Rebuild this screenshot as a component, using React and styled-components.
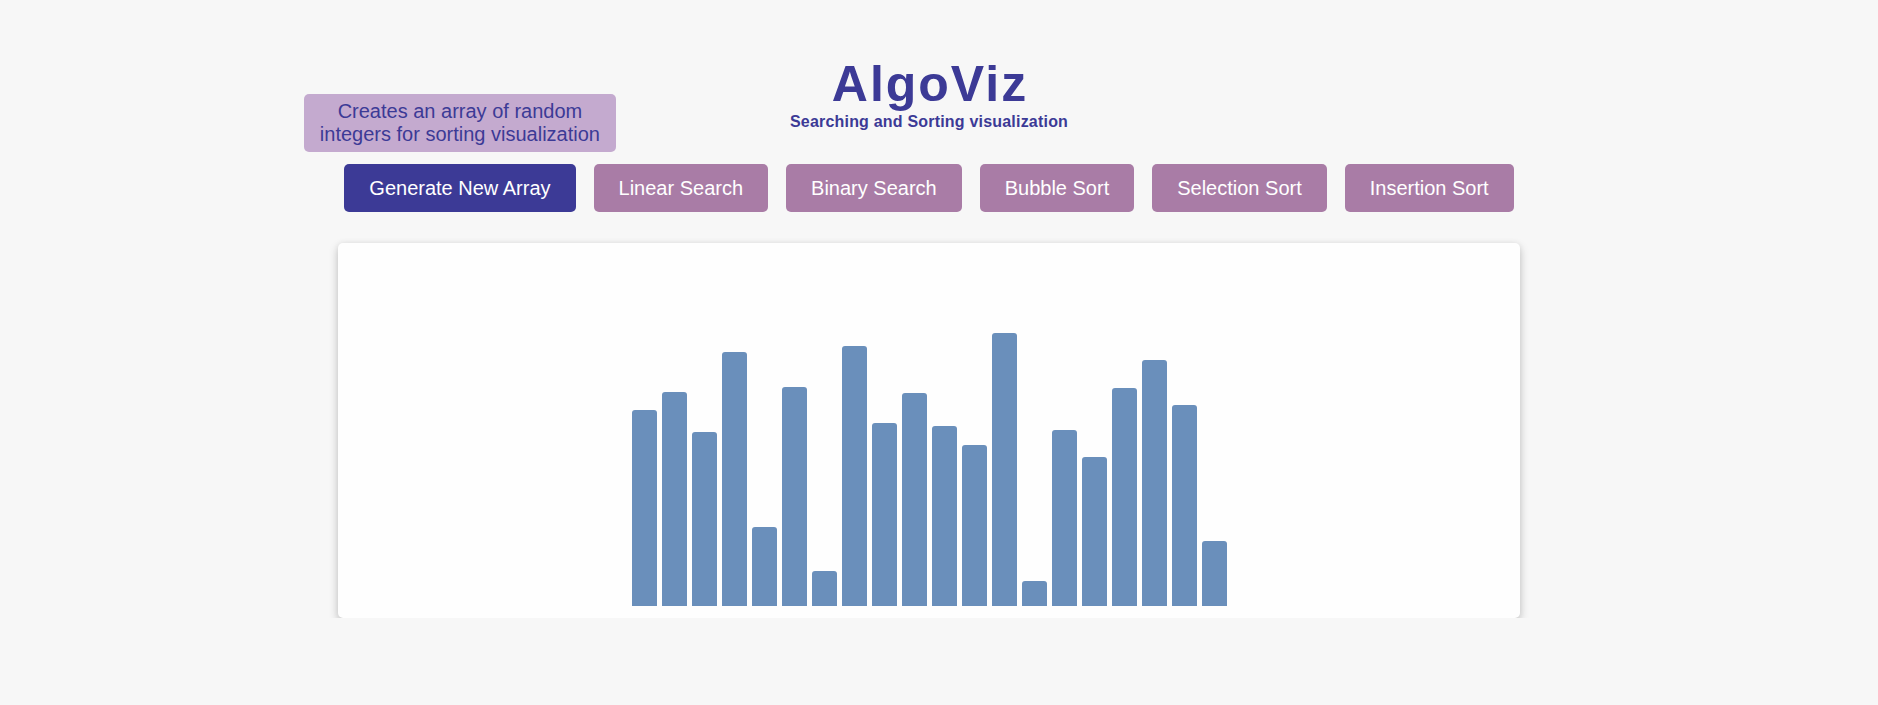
import React from 'react'
import styled, { createGlobalStyle } from 'styled-components'

const GlobalStyle = createGlobalStyle`
  body {
    margin: 0;
    background: #f7f7f7;
    font-family: "Liberation Sans", Arial, sans-serif;
  }
`

const algorithms = ['Linear Search', 'Binary Search', 'Bubble Sort', 'Selection Sort', 'Insertion Sort']

const values = [196, 214, 174, 254, 79, 219, 35, 260, 183, 213, 180, 161, 273, 25, 176, 149, 218, 246, 201, 65]

function App() {
  return (
    <>
      <GlobalStyle />
      <Page>
        <Header>
          <Title>AlgoViz</Title>
          <Subtitle>Searching and Sorting visualization</Subtitle>
        </Header>

        <ButtonRow>
          <ButtonWrap>
            <Tooltip>Creates an array of random integers for sorting visualization</Tooltip>
            <Button $primary>Generate New Array</Button>
          </ButtonWrap>
          {algorithms.map((name) => (
            <Button key={name}>{name}</Button>
          ))}
        </ButtonRow>

        <Card>
          {values.map((v, i) => (
            <Bar key={i} $h={v} />
          ))}
        </Card>
      </Page>
    </>
  )
}

export default App


const Page = styled.div`
    display: flex;
    flex-direction: column;
    align-items: center;
    padding: 55px 20px 0 0;
`

const Header = styled.div`
    display: flex;
    flex-direction: column;
    align-items: center;
    color: #3c3a96;
`

const Title = styled.h1`
    margin: 0;
    font-size: 50px;
    font-weight: bold;
    letter-spacing: 2px;
    padding-left: 2px;
`

const Subtitle = styled.p`
    margin: 0;
    font-size: 16px;
    font-weight: bold;
    letter-spacing: 0.2px;
`

const ButtonRow = styled.div`
    display: flex;
    gap: 18px;
    margin-top: 33px;
`

const ButtonWrap = styled.div`
    position: relative;
    display: flex;
`

const Button = styled.button`
    font-family: inherit;
    font-size: 20px;
    line-height: 24px;
    padding: 12px 25px;
    border: none;
    border-radius: 5px;
    color: #ffffff;
    background: ${(p) => (p.$primary ? '#3c3a96' : '#a97ca6')};
    cursor: pointer;
`

const Tooltip = styled.div`
    position: absolute;
    bottom: calc(100% + 12px);
    left: 50%;
    transform: translateX(-50%);
    width: 312px;
    box-sizing: border-box;
    padding: 6px 8px;
    border-radius: 5px;
    background: #c4aacf;
    color: #3c3a96;
    font-size: 20px;
    line-height: 23px;
    text-align: center;
`

const Card = styled.div`
    margin-top: 31px;
    width: 1182px;
    height: 375px;
    box-sizing: border-box;
    padding-bottom: 12px;
    display: flex;
    align-items: flex-end;
    justify-content: center;
    gap: 5px;
    background: #fefefe;
    border-radius: 5px;
    box-shadow: 0 4px 10px rgba(0, 0, 0, 0.22), 0 0 6px rgba(0, 0, 0, 0.05);
`

const Bar = styled.div.attrs((p) => ({ style: { height: p.$h } }))`
    width: 25px;
    background: #6a8fbb;
    border-radius: 3px 3px 0 0;
`
